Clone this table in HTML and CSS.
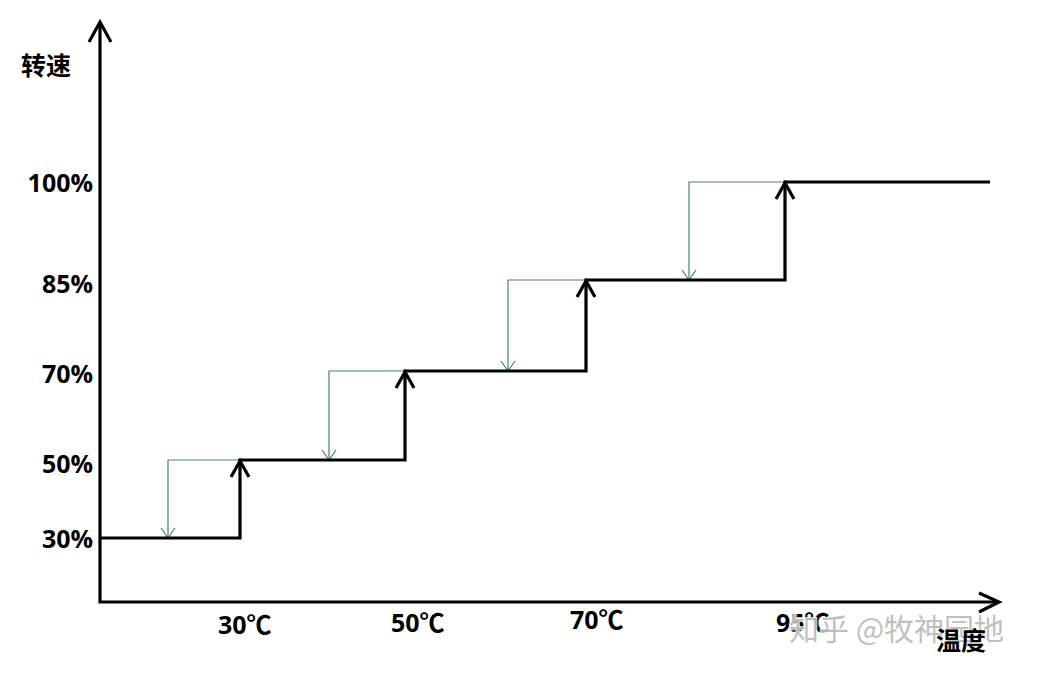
FILE: index.html
```html
<!DOCTYPE html>
<html lang="zh">
<head>
<meta charset="utf-8">
<title>转速-温度</title>
<link rel="stylesheet" href="styles.css">
</head>
<body>
<div class="canvas">
  <svg class="chart" width="1039" height="673" viewBox="0 0 1039 673" xmlns="http://www.w3.org/2000/svg">
    <!-- green return paths -->
    <g class="green">
      <polyline points="240,460 168,460 168,538"/>
      <polyline points="161,528 168,538 175,528"/>
      <polyline points="405,371 329,371 329,460"/>
      <polyline points="322,450 329,460 336,450"/>
      <polyline points="586,280 508,280 508,371"/>
      <polyline points="501,361 508,371 515,361"/>
      <polyline points="785,182 689,182 689,280"/>
      <polyline points="682,270 689,280 696,270"/>
    </g>
    <!-- axes -->
    <g class="black">
      <polyline points="100,22 100,602 999,602"/>
      <polyline points="89,42 100,22 111,42"/>
      <polyline points="979,593 999,602 979,612"/>
      <!-- steps -->
      <polyline points="100,538 240,538 240,460 405,460 405,371 586,371 586,280 785,280 785,182 990,182"/>
      <polyline points="231,477 240,461 249,477"/>
      <polyline points="396,388 405,372 414,388"/>
      <polyline points="577,297 586,281 595,297"/>
      <polyline points="776,199 785,183 794,199"/>
    </g>
    <!-- labels -->
    <text class="lbl" x="21" y="75">转速</text>
    <text class="lbl end" x="93" y="192">100%</text>
    <text class="lbl end" x="93" y="293">85%</text>
    <text class="lbl end" x="93" y="383">70%</text>
    <text class="lbl end" x="93" y="473">50%</text>
    <text class="lbl end" x="93" y="548">30%</text>
    <text class="lbl" x="218" y="634">30℃</text>
    <text class="lbl" x="391" y="632">50℃</text>
    <text class="lbl" x="570" y="629">70℃</text>
    <text class="lbl" x="776" y="632">95℃</text>
    <text class="wm" x="789" y="640">知乎 @牧神园地</text>
    <text class="lbl" x="936" y="650">温度</text>
  </svg>
</div>
</body>
</html>
```
FILE: styles.css
```css
html, body {
  margin: 0;
  padding: 0;
  background: #ffffff;
}
.canvas {
  width: 1039px;
  height: 673px;
  background: #ffffff;
  overflow: hidden;
}
.chart {
  display: block;
}
.green polyline {
  fill: none;
  stroke: #3f8a55;
  stroke-width: 1.2;
}
.black polyline {
  fill: none;
  stroke: #000000;
  stroke-width: 3.2;
  stroke-linejoin: miter;
}
.lbl {
  font-family: "Open Sans", "Noto Sans CJK SC", sans-serif;
  font-weight: 700;
  font-size: 25px;
  fill: #000000;
}
.end {
  text-anchor: end;
}
.wm {
  font-family: "Noto Sans CJK SC", sans-serif;
  font-weight: 400;
  font-size: 30px;
  fill: #b4b4b4;
  fill-opacity: 0.85;
  stroke: #ffffff;
  stroke-width: 2;
  stroke-opacity: 0.8;
  paint-order: stroke;
}
```
